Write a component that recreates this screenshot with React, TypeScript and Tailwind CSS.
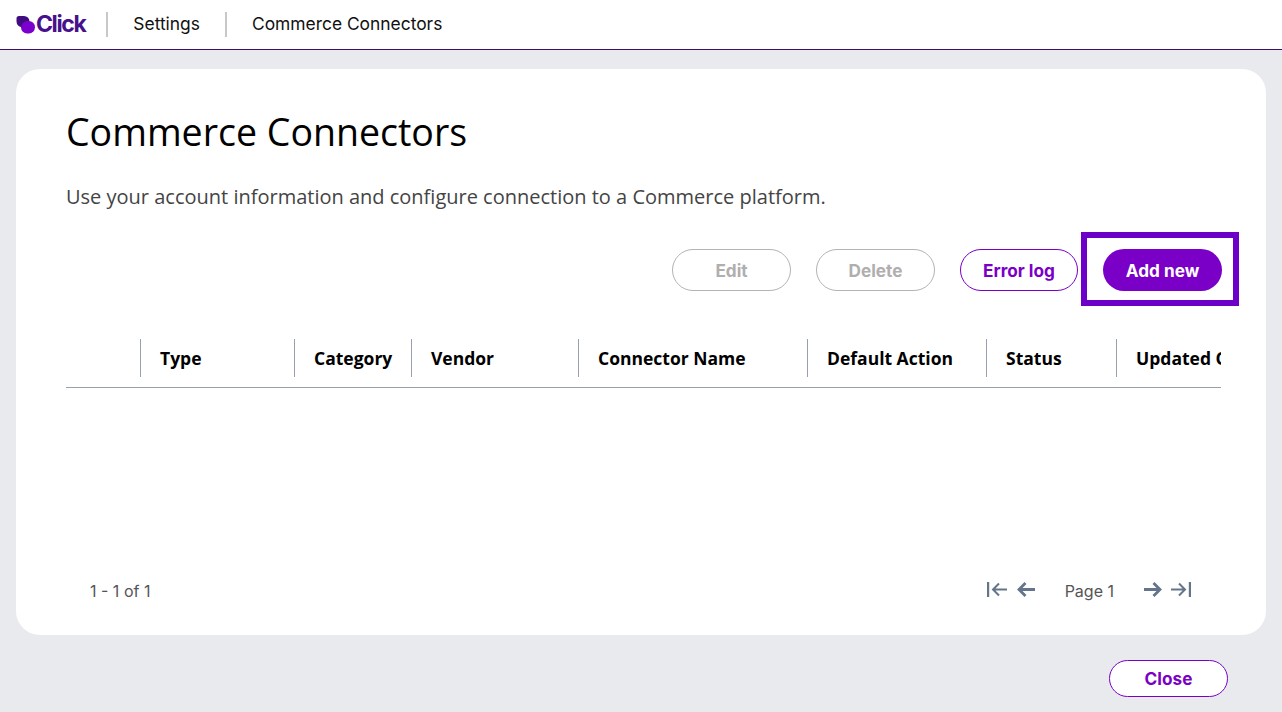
const columns = [
  { label: "", width: "w-[74px]" },
  { label: "Type", width: "w-[154px]" },
  { label: "Category", width: "w-[117px]" },
  { label: "Vendor", width: "w-[167px]" },
  { label: "Connector Name", width: "w-[229px]" },
  { label: "Default Action", width: "w-[179px]" },
  { label: "Status", width: "w-[130px]" },
  { label: "Updated On", width: "w-[150px]" },
];

const ui = "font-['Inter','Noto_Sans',sans-serif]";

const Logo = () => (
  <div className="flex items-center">
    <svg width="19" height="18" viewBox="0 0 19 18">
      <path d="M3 0 h5 a5.5 5.5 0 0 1 0 11 h-2 a5.5 5.5 0 0 1-5.5-5.5 v-3 a2.5 2.5 0 0 1 2.5-2.5z" fill="#3f0d80" />
      <rect x="5" y="5" width="14" height="12.5" rx="6.2" fill="#7a00cc" />
      <path d="M5 11 a6 6 0 0 1 6-6 h-3 a3 3 0 0 0-3 3z" fill="#3f0d80" />
    </svg>
    <span className={`${ui} ml-[1px] text-[23px] font-bold leading-none tracking-[-1.4px] text-[#47108c]`}>
      Click
    </span>
  </div>
);

const FirstIcon = () => (
  <svg width="20" height="15" viewBox="0 0 20 15" fill="none" stroke="currentColor" strokeWidth="2">
    <path d="M1 0 v15" strokeWidth="2.4" />
    <path d="M20 7.5 H6 M12 1.5 L6 7.5 L12 13.5" />
  </svg>
);

const PrevIcon = () => (
  <svg width="18" height="15" viewBox="0 0 18 15" fill="none" stroke="currentColor" strokeWidth="2.8">
    <path d="M18 7.5 H2 M8.5 1 L2 7.5 L8.5 14" />
  </svg>
);

const NextIcon = () => (
  <svg width="18" height="15" viewBox="0 0 18 15" fill="none" stroke="currentColor" strokeWidth="2.8">
    <path d="M0 7.5 H16 M9.5 1 L16 7.5 L9.5 14" />
  </svg>
);

const LastIcon = () => (
  <svg width="20" height="15" viewBox="0 0 20 15" fill="none" stroke="currentColor" strokeWidth="2">
    <path d="M19 0 v15" strokeWidth="2.4" />
    <path d="M0 7.5 H14 M8 1.5 L14 7.5 L8 13.5" />
  </svg>
);

const OutlineButton = ({ label, disabled }: { label: string; disabled?: boolean }) => (
  <button
    className={`${ui} mt-[17px] h-[42px] rounded-full border bg-white pt-[1px] text-[17.2px] font-bold ${
      disabled ? "w-[119px] border-[#b5b3b3] text-[#b0aeae]" : "w-[118px] border-[#7a00c8] text-[#7a00c8]"
    }`}
  >
    {label}
  </button>
);

export default function App() {
  return (
    <div className="flex h-[712px] w-[1282px] flex-col overflow-hidden bg-[#e9eaee]">
      <header className="flex h-[50px] shrink-0 items-center border-b border-[#3f0d70] bg-white pl-[16px]">
        <Logo />
        <div className="ml-[21px] h-[25px] w-[2px] bg-[#c8c8c8]" />
        <span className={`${ui} ml-[25px] text-[17.4px] text-[#111]`}>Settings</span>
        <div className="ml-[25px] h-[25px] w-[2px] bg-[#c8c8c8]" />
        <span className={`${ui} ml-[25px] text-[17.4px] text-[#111]`}>Commerce Connectors</span>
      </header>

      <main className="mx-[16px] mt-[19px] flex h-[566px] w-[1250px] shrink-0 flex-col rounded-[24px] bg-white">
        <div className="px-[50px] pt-[38px]">
          <h1 className="font-['Open_Sans',sans-serif] text-[37.5px] leading-[50px] text-black">Commerce Connectors</h1>
          <p className="mt-[26px] font-['Open_Sans',sans-serif] text-[20px] leading-[28px] text-[#444]">
            Use your account information and configure connection to a Commerce platform.
          </p>
        </div>

        <div className="mt-[21px] flex items-start justify-end pr-[27px]">
          <OutlineButton label="Edit" disabled />
          <div className="w-[25px]" />
          <OutlineButton label="Delete" disabled />
          <div className="w-[25px]" />
          <OutlineButton label="Error log" />
          <div className="ml-[3px] flex h-[74px] w-[158px] items-start border-[6px] border-[#6c00c9] pl-[16px] pt-[11px]">
            <button className={`${ui} h-[42px] w-[119px] rounded-full bg-[#7a00c8] pt-[1px] text-[17.2px] font-bold text-white`}>
              Add new
            </button>
          </div>
        </div>

        <div className="mx-[50px] mt-[33px] w-[1155px] overflow-hidden border-b border-[#97a0ae]">
          <div className="flex h-[48px] w-[1300px] items-start">
            {columns.map((col, i) => (
              <div
                key={i}
                className={`flex h-[38px] shrink-0 items-center ${col.width} ${
                  i === 0 ? "" : "border-l border-[#97a0ae] pl-[19px]"
                } font-['Open_Sans',sans-serif] text-[17.5px] font-bold whitespace-nowrap text-black`}
              >
                {col.label}
              </div>
            ))}
          </div>
        </div>

        <div className="mt-[191px] flex items-center justify-between pl-[74px] pr-[75px]">
          <span className={`${ui} text-[16px] text-[#555]`}>1 - 1 of 1</span>
          <div className="flex -translate-y-[2px] items-center text-[#64748b]">
            <FirstIcon />
            <div className="ml-[10px]">
              <PrevIcon />
            </div>
            <span className={`${ui} ml-[30px] mr-[30px] translate-y-[2px] text-[16px] text-[#555]`}>Page 1</span>
            <NextIcon />
            <div className="ml-[9px]">
              <LastIcon />
            </div>
          </div>
        </div>
      </main>

      <div className="flex justify-end pr-[54px] pt-[25px]">
        <button className={`${ui} h-[37px] w-[119px] rounded-full border border-[#7a00c8] bg-white text-[17.2px] font-bold text-[#7a00c8]`}>
          Close
        </button>
      </div>
    </div>
  );
}
